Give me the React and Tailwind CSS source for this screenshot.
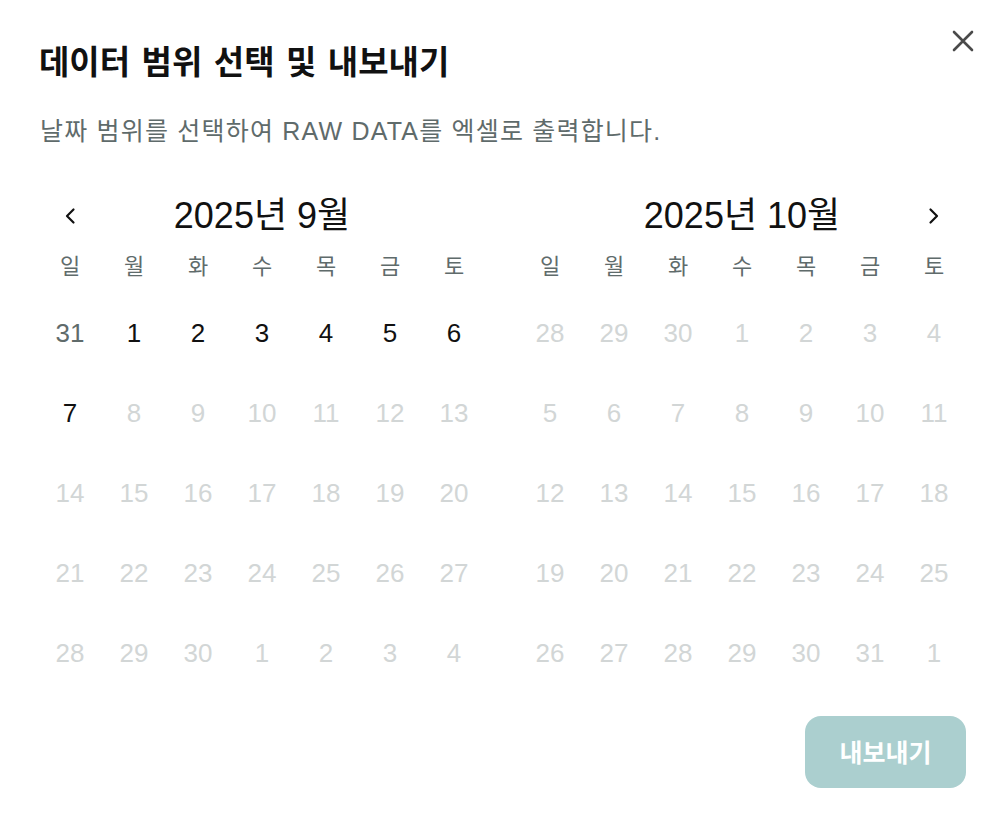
import React from "react";

const FONT = { fontFamily: '"Liberation Sans", "Noto Sans CJK KR", sans-serif' };
const KFONT = { fontFamily: '"Noto Sans CJK KR", "Liberation Sans", sans-serif' };
const WEEK = ["일", "월", "화", "수", "목", "금", "토"];

const sept = [
  [{ d: 31, t: "out" }, ...[1, 2, 3, 4, 5, 6].map((d) => ({ d, t: "on" }))],
  [{ d: 7, t: "on" }, ...[8, 9, 10, 11, 12, 13].map((d) => ({ d, t: "off" }))],
  [14, 15, 16, 17, 18, 19, 20].map((d) => ({ d, t: "off" })),
  [21, 22, 23, 24, 25, 26, 27].map((d) => ({ d, t: "off" })),
  [28, 29, 30, 1, 2, 3, 4].map((d) => ({ d, t: "off" })),
];
const oct = [
  [28, 29, 30, 1, 2, 3, 4],
  [5, 6, 7, 8, 9, 10, 11],
  [12, 13, 14, 15, 16, 17, 18],
  [19, 20, 21, 22, 23, 24, 25],
  [26, 27, 28, 29, 30, 31, 1],
].map((r) => r.map((d) => ({ d, t: "off" })));

function Chevron({ dir }) {
  return (
    <svg width="14" height="18" viewBox="0 0 14 18" fill="none">
      <path
        d={dir === "left" ? "M10.5 2.5 L4 9 L10.5 15.5" : "M3.5 2.5 L10 9 L3.5 15.5"}
        stroke="#111"
        strokeWidth="2.2"
        strokeLinecap="round"
        strokeLinejoin="round"
      />
    </svg>
  );
}

function Calendar({ title, rows, left, right }) {
  const color = { on: "text-[#111]", out: "text-[#5f6b6b]", off: "text-[#d2d6d6]" };
  return (
    <div className="w-[448px]">
      <div className="grid grid-cols-7 h-[40px] items-center">
        <div className="flex justify-center">{left && <Chevron dir="left" />}</div>
        <div className="col-span-5 text-center text-[36px] leading-[44px] text-[#111]">{title}</div>
        <div className="flex justify-center">{right && <Chevron dir="right" />}</div>
      </div>
      <div className="grid grid-cols-7 mt-[12px] h-[40px] items-center">
        {WEEK.map((w) => (
          <div key={w} className="text-center text-[22px] text-[#5f6b6b]">{w}</div>
        ))}
      </div>
      <div className="mt-[7px]">
        {rows.map((r, i) => (
          <div key={i} className="grid grid-cols-7 h-[80px] items-center">
            {r.map((c, j) => (
              <div key={j} className={`text-center text-[26px] ${color[c.t]}`}>{c.d}</div>
            ))}
          </div>
        ))}
      </div>
    </div>
  );
}

export default function App() {
  return (
    <div style={FONT} className="w-[1006px] h-[832px] bg-white relative px-[38px] pt-[40px]">
      <button className="absolute right-[32px] top-[30px] w-[22px] h-[22px] flex items-center justify-center">
        <svg width="22" height="22" viewBox="0 0 22 22" fill="none">
          <path d="M2 2 L20 20 M20 2 L2 20" stroke="#4a4a4a" strokeWidth="2.6" strokeLinecap="round" />
        </svg>
      </button>
      <h1
        style={KFONT}
        className="pl-[1px] text-[33px] leading-[40px] font-bold text-[#111] [word-spacing:4px]"
      >
        데이터 범위 선택 및 내보내기
      </h1>
      <p className="pl-[2px] mt-[37px] text-[25px] leading-[28px] tracking-[1.2px] text-[#5f6b6b]">
        날짜 범위를 선택하여 RAW DATA를 엑셀로 출력합니다.
      </p>
      <div className="flex gap-[32px] mt-[49px]">
        <Calendar title="2025년 9월" rows={sept} left />
        <Calendar title="2025년 10월" rows={oct} right />
      </div>
      <div className="flex justify-end mt-[23px] pr-[2px]">
        <button
          style={KFONT}
          className="w-[161px] h-[72px] rounded-[16px] bg-[#abcfcf] text-white text-[25px] font-bold"
        >
          내보내기
        </button>
      </div>
    </div>
  );
}
